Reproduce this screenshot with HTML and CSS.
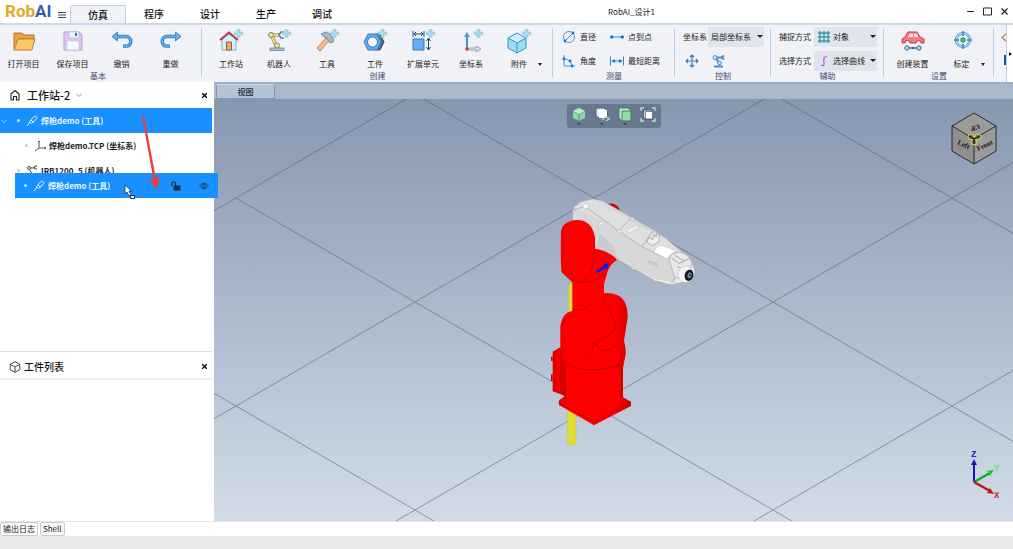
FILE: index.html
```html
<!DOCTYPE html>
<html lang="zh-CN">
<head>
<meta charset="utf-8">
<title>RobAI_设计1</title>
<link rel="stylesheet" href="styles.css">
</head>
<body>
<svg class="defs" width="0" height="0" aria-hidden="true">
  <defs>
    <symbol id="plus" viewBox="0 0 10 10"><path d="M3.500 .5h3v3h3v3h-3v3h-3v-3h-3v-3h3z" fill="#a3dcf3" stroke="#8fbfda" stroke-width=".7"/></symbol>
    <symbol id="torch" viewBox="0 0 12 12"><path d="M1 11l3-4M3.500 6.500l4-4.500 2-1 1.500 1.500-1 2L5.500 8.500zM5 5l2.500 2.500" fill="none" stroke="currentColor" stroke-width="1"/></symbol>
    <symbol id="cubeline" viewBox="0 0 12 12"><path d="M6 .7l4.800 2.600v5.400L6 11.300 1.200 8.700V3.300zM1.200 3.300L6 6l4.800-2.700M6 6v5.300" fill="none" stroke="currentColor" stroke-width="1" stroke-linejoin="round"/></symbol>
  </defs>
</svg>
<div class="app">
  <header class="titlebar">
    <div class="logo"><span class="logo-rob">Rob</span><span class="logo-ai">AI</span></div>
    <button class="menu" aria-label="菜单"><svg width="8" height="8" viewBox="0 0 8 8"><path d="M0 1.500h8M0 4h8M0 6.500h8" stroke="#333" stroke-width=".9"/></svg></button>
    <nav class="tabs">
      <button class="tab active">仿真</button><button class="tab">程序</button><button class="tab">设计</button><button class="tab">生产</button><button class="tab">调试</button>
    </nav>
    <div class="title">RobAI_设计1</div>
    <div class="window-buttons">
      <button aria-label="最小化"><svg width="9" height="9" viewBox="0 0 9 9"><path d="M1 4.500h7" stroke="#222"/></svg></button>
      <button aria-label="最大化"><svg width="9" height="9" viewBox="0 0 9 9"><path d="M.5 1h8v7h-8z" fill="none" stroke="#222"/></svg></button>
      <button aria-label="关闭"><svg width="9" height="9" viewBox="0 0 9 9"><path d="M1.500 1.500l6 6M7.500 1.500l-6 6" stroke="#222" stroke-width="1.200"/></svg></button>
    </div>
  </header>

  <section class="ribbon">
    <div class="group g-basic">
      <div class="tools">
        <button class="tool"><svg viewBox="0 0 26 26"><path d="M3 21V5h8l2 2h10v4H7L4 21z" fill="#e9a33f" stroke="#a87834"/><path d="M7 11h17l-3 11H3z" fill="#fbc66c" stroke="#b98539"/></svg><span>打开项目</span></button>
        <button class="tool"><svg viewBox="0 0 26 26"><path d="M4 4h15l3 3v15H4z" fill="#dcc6ee" stroke="#b9a0d2"/><path d="M9 4h10v6H9z" fill="#eef4fb" stroke="#a9b3cc" stroke-width=".6"/><path d="M15 5h2v3h-2z" fill="#416f99"/><path d="M7 13h12v9H7z" fill="#f6f8fc" stroke="#c5b8dc" stroke-width=".6"/></svg><span>保存项目</span></button>
        <button class="tool"><svg viewBox="0 0 26 26"><path d="M7 8.500h10a4.800 4.800 0 010 9.600h-3" fill="none" stroke="#2573bd" stroke-width="3.400"/><path d="M8.500 4L3 8.500 8.500 13z" fill="#65b0f5" stroke="#2573bd" stroke-width=".8"/><path d="M7 8.500h10a4.800 4.800 0 010 9.600h-2.500" fill="none" stroke="#65b0f5" stroke-width="1.900"/></svg><span>撤销</span></button>
        <button class="tool"><svg viewBox="0 0 26 26"><path d="M19 8.500H9a4.800 4.800 0 000 9.600h3" fill="none" stroke="#2573bd" stroke-width="3.400"/><path d="M17.500 4L23 8.500 17.500 13z" fill="#65b0f5" stroke="#2573bd" stroke-width=".8"/><path d="M19 8.500H9a4.800 4.800 0 000 9.600h2.500" fill="none" stroke="#65b0f5" stroke-width="1.900"/></svg><span>重做</span></button>
      </div>
      <div class="caption">基本</div>
    </div>

    <div class="group g-create">
      <div class="tools">
        <button class="tool"><svg viewBox="0 0 26 26"><path d="M4 12l7-6 7 6v10H4z" fill="#d5f0fb" stroke="#7cacc7"/><path d="M8.500 14h5v8h-5z" fill="#f0a36a" stroke="#95603c"/><path d="M2 12l9-7.500L20 12" fill="none" stroke="#c8333d" stroke-width="1.800"/><use href="#plus" x="16" y="1" width="9" height="9"/></svg><span>工作站</span></button>
        <button class="tool"><svg viewBox="0 0 26 26"><path d="M4 7h9M6 8l5 12" stroke="#928f62" stroke-width="3.600"/><path d="M4 7h9M6 8l5 12" stroke="#eadb83" stroke-width="2.300"/><circle cx="5" cy="7" r="2.500" fill="#f4e48d" stroke="#85845f"/><path d="M18 4h-3l-2 3 2 3h3" fill="none" stroke="#637c93" stroke-width="1.600"/><path d="M4 20h14v2.500H4z" fill="#b5c5d2" stroke="#637c93" stroke-width=".8"/><circle cx="11" cy="17.500" r="2.500" fill="#f4e48d" stroke="#85845f"/><use href="#plus" x="16" y="1" width="9" height="9"/></svg><span>机器人</span></button>
        <button class="tool"><svg viewBox="0 0 26 26"><path d="M3 20l9-10 3 3-9 10z" fill="#ffb580" stroke="#c8855a"/><path d="M7 6l5-2 4 2 4 6-2 3-3-1-2-4-3-1z" fill="#a4bac9" stroke="#758e9e"/><use href="#plus" x="16" y="1" width="9" height="9"/></svg><span>工具</span></button>
        <button class="tool"><svg viewBox="0 0 26 26"><path d="M13 6h5l4 8-4 8h-5z" fill="#526784" stroke="#334c6b"/><path d="M6 6h9l4 8-4 8H6l-4-8z" fill="#65a8ee" stroke="#3f7dbe"/><circle cx="10.500" cy="14" r="5" fill="#f3f7fc" stroke="#3f7dbe"/><use href="#plus" x="16" y="1" width="9" height="9"/></svg><span>工件</span></button>
        <button class="tool"><svg viewBox="0 0 26 26"><path d="M3 11h11v11H3z" fill="#66aef3" stroke="#3a79b6"/><path d="M4 6h9M4 6l2-2M4 6l2 2M13 6l-2-2M13 6l-2 2M3 3v6M14 3v6M18.500 11v10M18.500 10l-2 3M18.500 10l2 3M18.500 22l-2-3M18.500 22l2-3" stroke="#184b70" fill="none"/><use href="#plus" x="16" y="1" width="9" height="9"/></svg><span>扩展单元</span></button>
        <button class="tool"><svg viewBox="0 0 26 26"><path d="M9 20V8" stroke="#3b86cd" stroke-width="1.800"/><path d="M6 9l3-5 3 5z" fill="#4d99df"/><path d="M10 20h8v-2l5 3-5 3v-2h-8z" fill="#d7e2ed" stroke="#8197ad" stroke-width=".8"/><circle cx="9" cy="21" r="1.800" fill="#d63843"/><use href="#plus" x="16" y="1" width="9" height="9"/></svg><span>坐标系</span></button>
        <button class="tool"><svg viewBox="0 0 26 26"><path d="M2 10l9-5 9 5v10l-9 5-9-5z" fill="#9bdcfb"/><path d="M2 10l9-5 9 5-9 5z" fill="#c8f1ff"/><path d="M2 10l9-5 9 5v10l-9 5-9-5zM2 10l9 5 9-5M11 15v10" fill="none" stroke="#438ec3"/><use href="#plus" x="16" y="1" width="9" height="9"/></svg><span>附件</span></button>
        <button class="more" aria-label="更多"><i class="caret"></i></button>
      </div>
      <div class="caption">创建</div>
    </div>

    <div class="group g-measure">
      <div class="pairs">
        <button class="small"><svg viewBox="0 0 14 14"><circle cx="7" cy="7" r="5.500" fill="none" stroke="#5294cc"/><path d="M3 11l8-8" stroke="#1c82d8"/><circle cx="3" cy="11" r="1.400" fill="#0878db"/><circle cx="11" cy="3" r="1.400" fill="#0878db"/></svg><span>直径</span></button>
        <button class="small"><svg viewBox="0 0 14 14"><path d="M1 7h12" stroke="#3088d4"/><circle cx="1.700" cy="7" r="1.700" fill="#0878db"/><circle cx="12.300" cy="7" r="1.700" fill="#0878db"/></svg><span>点到点</span></button>
        <button class="small"><svg viewBox="0 0 14 14"><path d="M2 1v11h11M2 5q7 0 8 7" fill="none" stroke="#4b94cf"/><circle cx="2" cy="5" r="1.400" fill="#0878db"/><circle cx="8" cy="7" r="1.400" fill="#0878db"/><circle cx="10" cy="12" r="1.400" fill="#0878db"/></svg><span>角度</span></button>
        <button class="small"><svg viewBox="0 0 14 14"><path d="M.5 2.500v9M13.500 2.500v9M2 7h10" stroke="#3088d4"/><path d="M1.500 7l3.500-2v4zM12.500 7L9 5v4z" fill="#0878db"/></svg><span>最短距离</span></button>
      </div>
      <div class="caption">测量</div>
    </div>

    <div class="group g-control">
      <div class="rows">
        <div class="row"><label for="cs">坐标系</label><div class="combo"><select id="cs"><option>局部坐标系</option></select><i class="caret"></i></div></div>
        <div class="row icons">
          <button aria-label="移动"><svg width="14" height="14" viewBox="0 0 14 14"><path d="M7 1v12M1 7h12M5 3l2-2 2 2M5 11l2 2 2-2M3 5L1 7l2 2M11 5l2 2-2 2" fill="none" stroke="#3e80b9" stroke-width="1.200"/></svg></button>
          <button aria-label="机器人控制"><svg width="14" height="14" viewBox="0 0 14 14"><path d="M3 3.500h6M4 4l4 7M2 12.500h9M12 1.500L9.500 3.500l2.500 2" fill="none" stroke="#448fcc" stroke-width="2"/><circle cx="3" cy="3.500" r="2" fill="#cde7fb" stroke="#448fcc"/><circle cx="7.500" cy="9" r="1.800" fill="#cde7fb" stroke="#448fcc"/></svg></button>
        </div>
      </div>
      <div class="caption">控制</div>
    </div>

    <div class="group g-assist">
      <div class="rows">
        <div class="row"><label for="snap">捕捉方式</label><div class="combo with-icon"><svg viewBox="0 0 12 12"><path d="M2 0v12M6 0v12M10 0v12M0 2h12M0 6h12M0 10h12" stroke="#35979c" stroke-width="1.300"/></svg><select id="snap"><option>对象</option></select><i class="caret"></i></div></div>
        <div class="row"><label for="pick">选择方式</label><div class="combo with-icon"><svg viewBox="0 0 12 12"><path d="M3 10.500h2Q6.500 10 6 7.500T6 3Q6.500 1.500 9 1.500" fill="none" stroke="#ad55d0" stroke-width="1.200"/></svg><select id="pick"><option>选择曲线</option></select><i class="caret"></i></div></div>
      </div>
      <div class="caption">辅助</div>
    </div>

    <div class="group g-settings">
      <div class="tools">
        <button class="tool"><svg viewBox="0 0 26 26"><path d="M2 15v-4l3-2 3-5h9l3 5 4 2v4h-3a2.500 2.500 0 00-5 0h-6a2.500 2.500 0 00-5 0z" fill="#f77b80" stroke="#bd3e47"/><path d="M8 9l2-3.500h3V9zM14 5.500h2.500l2 3.500H14z" fill="#f5e4e8"/><path d="M8 20h11" stroke="#3e668b" stroke-width="1.400"/><circle cx="7" cy="20" r="2.200" fill="#b7d7ec" stroke="#3e668b"/><circle cx="13" cy="20" r="1.200" fill="#3e668b"/><circle cx="19" cy="20" r="2.200" fill="#b7d7ec" stroke="#3e668b"/></svg><span>创建装置</span></button>
        <button class="tool"><svg viewBox="0 0 26 26"><circle cx="14" cy="12" r="6.800" fill="#e4f4fc" stroke="#3b8dc2" stroke-width="2.600"/><circle cx="14" cy="12" r="6.800" fill="none" stroke="#a8dcf4" stroke-width="1.400"/><path d="M14 3v5M14 16v5M5 12h5M18 12h5" stroke="#407eaa" stroke-width="1.600"/><circle cx="14" cy="12" r="2.300" fill="#53c06b" stroke="#2d8a61"/></svg><span>标定</span></button>
        <button class="more" aria-label="更多"><i class="caret"></i></button>
      </div>
      <div class="caption">设置</div>
    </div>
    <div class="group g-rest"><svg width="6" height="42" viewBox="0 0 6 42"><path d="M6 5L1 9.500 6 14" fill="none" stroke="#b88a42" stroke-width="1.200"/><path d="M4 27v9h2" fill="none" stroke="#164dc1" stroke-width="2"/></svg></div>
    <button class="next" aria-label="下一页"><i></i></button>
  </section>

  <main class="workspace">
    <aside class="sidebar">
      <section class="panel panel-tree">
        <div class="panel-head">
          <svg width="12" height="12" viewBox="0 0 12 12"><path d="M2 5v6h2.500V7.500h3V11H10V5L6 1.500z" fill="none" stroke="#222" stroke-width="1.100" stroke-linejoin="round"/></svg>
          <h2>工作站-2</h2>
          <button class="expand" aria-label="展开"><svg width="6" height="6" viewBox="0 0 6 6"><path d="M.5 2L3 4.500 5.500 2" fill="none" stroke="#777" stroke-width=".8"/></svg></button>
          <button class="close" aria-label="关闭面板"><svg width="5" height="5" viewBox="0 0 5 5"><path d="M0 0l5 5M5 0L0 5" stroke="#000" stroke-width="1.300"/></svg></button>
        </div>
        <ul class="tree">
          <li class="node selected"><svg class="chev" width="6" height="6" viewBox="0 0 6 6"><path d="M.5 2L3 4.500 5.500 2" fill="none" stroke="#cde6ff" stroke-width=".8"/></svg><i class="dot"></i><svg class="kind" width="12" height="12"><use href="#torch"/></svg><span>焊枪demo (工具)</span></li>
          <li class="node child"><i class="dot"></i><svg class="kind" width="12" height="12" viewBox="0 0 12 12"><path d="M5 1v7h7M5 8l-4 3M4 2l1-1 1 1M10.500 7L12 8l-1.500 1" fill="none" stroke="#555" stroke-width="1"/></svg><span>焊枪demo.TCP (坐标系)</span></li>
          <li class="node robot"><i class="dot"></i><svg class="kind" width="12" height="12" viewBox="0 0 12 12"><path d="M3 3h4l2-1M3 4l4 6M2 11h8M11 1H9L8 3l1 1h2" fill="none" stroke="#444" stroke-width="1"/><circle cx="3" cy="3" r="1.500" fill="#fff" stroke="#444"/></svg><span>IRB1200_5 (机器人)</span></li>
        </ul>
        <div class="node dragged"><i class="dot"></i><svg class="kind" width="12" height="12"><use href="#torch"/></svg><span>焊枪demo (工具)</span>
          <button class="lock" aria-label="锁定"><svg width="10" height="10" viewBox="0 0 10 10"><path d="M3 5h6v4H3z" fill="#153044" stroke="#153044"/><path d="M1 5V2.500a1.500 1.500 0 013.500 0V5" fill="none" stroke="#153044" stroke-width="1.200"/></svg></button>
          <button aria-label="可见"><svg width="10" height="10" viewBox="0 0 10 10"><path d="M.5 5Q5-.5 9.500 5 5 10.500.5 5z" fill="none" stroke="#164468"/><circle cx="5" cy="5" r="1.500" fill="none" stroke="#164468"/></svg></button>
        </div>
        <svg class="drag-arrow" width="24" height="76" viewBox="0 0 24 76"><path d="M3 1l2-.5 12 64-2.500.5z" fill="#ef3b3b"/><path d="M10 65l11-3-3 12z" fill="#ef3b3b"/></svg>
        <svg class="pointer" width="12" height="16" viewBox="0 0 12 16"><path d="M1 1v9l2-2 2 4 2-1-2-4h2.500z" fill="#fff" stroke="#173350" stroke-width=".8"/><path d="M6.500 11.500h4v3h-4z" fill="#fff" stroke="#173350"/></svg>
      </section>
      <section class="panel panel-parts">
        <div class="panel-head">
          <svg width="12" height="12" class="gray"><use href="#cubeline"/></svg>
          <h2>工件列表</h2>
          <button class="close" aria-label="关闭面板"><svg width="5" height="5" viewBox="0 0 5 5"><path d="M0 0l5 5M5 0L0 5" stroke="#000" stroke-width="1.300"/></svg></button>
        </div>
      </section>
    </aside>

    <section class="view">
      <div class="view-tabs"><button>视图</button></div>
      <div class="scene">
        <svg class="model" viewBox="214 99 799 422" preserveAspectRatio="xMidYMid slice" role="img" aria-label="机器人三维模型">
          <defs>
            <linearGradient id="white-arm" x1="0" y1="0" x2=".3" y2="1"><stop offset="0" stop-color="#dcdddd"/><stop offset=".45" stop-color="#d3d4d4"/><stop offset="1" stop-color="#eee"/></linearGradient>
            <linearGradient id="red-body"><stop offset="0" stop-color="#e00000"/><stop offset=".2" stop-color="#ff0000"/><stop offset=".82" stop-color="#fb0000"/><stop offset="1" stop-color="#d00000"/></linearGradient>
            <pattern id="thread" width="6" height="6" patternUnits="userSpaceOnUse"><path d="M0 0h6v6H0z" fill="#f5ed3b"/><path d="M0 2l6 3" stroke="#aaa329" stroke-width="1.500"/></pattern>
          </defs>
          <g stroke="#56606f" stroke-width=".7" opacity=".8">
            <path d="M57 302L415 94M57 510L773 94M236 614L1131 94M594 614L1131 302M952 614l179-104"/>
            <path d="M236 198l716 416M415 94l716 416M773 94l358 208M57 302l537 312"/>
          </g>
          <g transform="translate(540 190) scale(.3333)">
            <path d="M86 290q4-12 15-10v140H86zM82 630h26v132q-13 8-26 0z" fill="url(#thread)" stroke="#c2bb38"/>
            <path d="M200 43q25-10 39 15l-6 20z" fill="#d20000"/>
            <path d="M98 60l22-24 38-10 30 7 152 86 36 25 42 35 36 33 12 34-12 28-22 2-40 8-46-12-120-68-62-24-28-80H98z" fill="url(#white-arm)" stroke="#a9abad" stroke-width="2"/>
            <path d="M126 39l34-9 165 92 45 24 48 36-30 27-82-38-70-34-136-85z" fill="#dfdfde"/>
            <path d="M100 62l34 2 102 60 70 49 82 40 21 48-5 18-58-12-123-69-59-26-32-72z" fill="#d7d7d7"/>
            <path d="M100 61l34-12 102 74 70 47 82 40q25 22 20 50l-14 18M236 123l38-40M306 170l35-51" fill="none" stroke="#b1b2b3" stroke-width="3"/>
            <path d="M180 130l42 40 12 39-64-34z" fill="#c9cacc"/>
            <path d="M260 123l30-17 7 6-29 16z" fill="#f8f8f8" stroke="#96989a"/>
            <path d="M342 187q4-22 27-20l44 17q-27 5-30 24z" fill="#fff" stroke="#969a9d"/>
            <path d="M321 156l6-14 12 7 3-14 7 6v-10l8 2v21l-20 14z" fill="#eee" stroke="#8e9194" stroke-width="2"/>
            <path d="M387 208q8-21 31-22 30 4 38 35l-20 48-32-7z" fill="#e7e7e7" stroke="#a0a1a1" stroke-width="2"/>
            <path d="M394 204l24 16 30-14M405 196l27 17M411 230l20 8" fill="none" stroke="#a7a9aa" stroke-width="3"/>
            <ellipse cx="437" cy="253" rx="23" ry="25" fill="#f3f3f3" stroke="#999"/>
            <ellipse cx="447" cy="256" rx="13" ry="17" transform="rotate(15 447 256)" fill="#111b20"/>
            <ellipse cx="449" cy="256" rx="6" ry="9" transform="rotate(15 449 256)" fill="#6b9097"/><circle cx="450" cy="256" r="3" fill="#122025"/>
            <g fill="#f7f7f7" stroke="#929497"><circle cx="137" cy="49" r="8"/><circle cx="185" cy="100" r="5"/><circle cx="238" cy="124" r="5"/><circle cx="277" cy="86" r="4"/><circle cx="292" cy="166" r="4"/><circle cx="345" cy="269" r="4"/><circle cx="281" cy="235" r="4"/><circle cx="386" cy="241" r="4"/></g>
            <path d="M322 217l8-4v12M334 219l8-3v13M345 223l7-2v10" fill="none" stroke="#aaacae" stroke-width="2"/>
            <path d="M63 125Q68 92 112 90q43 0 53 52v34q40 5 66 33-26 18-30 43l-9 30v27q45-2 60 23 12 22 11 50l-11 70q8 30 4 47l-7 35v88l24 13v13L162 706 57 645v-14l18-13-37-14V485l23-13V410q5-42 36-47v-86l-32-30q-4-30-2-122z" fill="url(#red-body)"/>
            <path d="M162 145q7 42-6 88-8 28-38 45M97 270q43 20 98-16M98 358q40 8 60-21M190 330q25 30 37 82-15 28-65 47l-12 55M62 410q12-29 42-35M76 510v129M245 480v139M79 520q66 38 165 3M165 460q24 43 63 6M55 638l107 58 107-58" fill="none" stroke="#a70000" stroke-width="3" opacity=".6"/>
            <path d="M38 500h-5v14h5zM38 553h-5v20h5zM61 475l14 50v93l-14-8z" fill="#d60000"/>
            <path d="M169 241l23-13-2-6 17-2-5 18-6-2-25 13z" fill="#1414ee"/>
          </g>
        </svg>
        <div class="view-tools">
          <button aria-label="视角"><svg viewBox="0 0 16 20"><path d="M8 2l6 3v7l-6 3-6-3V5z" fill="#8bd8a4"/><path d="M2 5l6 3 6-3M8 8v7" fill="none" stroke="#4c9b71"/><path d="M8 2l6 3-6 3-6-3z" fill="#b5efc3"/><path d="M6 17h4l-2 2z" fill="#313f55"/></svg></button>
          <button aria-label="显示方式"><svg viewBox="0 0 16 20"><path d="M2 2h8l3 2v8H5l-3-2z" fill="#e5eef3" stroke="#49616f"/><path d="M5 4h8v8H5z" fill="#fff"/><path d="M8 14q4-5 7-1l-3 2" fill="none" stroke="#b8c9d7" stroke-width="1.500"/><path d="M6 17h4l-2 2z" fill="#313f55"/></svg></button>
          <button aria-label="渲染方式"><svg viewBox="0 0 16 20"><path d="M2 2h9l3 3v10H5l-3-3z" fill="#bdf0c8" stroke="#477c67"/><path d="M5 5h9v10H5z" fill="#8ddda0" stroke="#477c67"/><path d="M6 17h4l-2 2z" fill="#313f55"/></svg></button>
          <button aria-label="适应窗口"><svg viewBox="0 0 16 20"><path d="M3.500 4h7l2 1.500V13h-7l-2-1.500z" fill="#dfe8f2" stroke="#465873"/><path d="M5.500 5.500h7V13h-7z" fill="#fff" stroke="#465873" stroke-width=".7"/><path d="M1 5V2h3M12 2h3v3M1 12v3h3M15 12v3h-3" fill="none" stroke="#b8e6cc" stroke-width="1.300"/></svg></button>
        </div>
        <svg class="nav-cube" width="50" height="56" viewBox="0 0 50 56">
          <path d="M25 2l22 13v25L25 53 3 40V15z" fill="#9b9b9b"/><path d="M3 15l22 13v25L3 40z" fill="#8f8f8f"/>
          <path d="M25 2l22 13v25L25 53 3 40V15zM3 15l22 13 22-13M25 28v25" fill="none" stroke="#1e1e1e" stroke-width=".9"/>
          <g fill="#858474" stroke="#d7ce4d"><circle cx="22" cy="26" r="3"/><circle cx="29" cy="26" r="3"/><circle cx="25" cy="31" r="3"/></g><path d="M20 25l5 3 6-3M25 28v5" stroke="#222" stroke-width="1.500" fill="none"/>
          <text x="8" y="33" transform="rotate(25 8 33)">Left</text><text x="29" y="40" transform="rotate(-25 29 40)">Front</text><text x="30" y="13" transform="rotate(160 30 13)">UP</text>
        </svg>
        <svg class="axes" width="38" height="54" viewBox="0 0 38 54">
          <path d="M8 34V14" stroke="#1616bd" stroke-width="2"/><path d="M5 17l3-6 3 6z" fill="#1616bd"/>
          <path d="M8 34l16-9" stroke="#17a326" stroke-width="2.200"/><path d="M21 23l7-1-4 6z" fill="#17c82a"/>
          <path d="M8 34l16 9" stroke="#ae1414" stroke-width="2.200"/><path d="M21 45l7 1-4-6z" fill="#c81414"/>
          <text x="5" y="9" fill="#1b24c6">Z</text><text x="28" y="23" fill="#58e86a">Y</text><text x="28" y="50" fill="#d12222">X</text>
        </svg>
      </div>
    </section>
  </main>
  <footer><div class="output-tabs"><button>输出日志</button><button>Shell</button></div><div class="status"></div></footer>
</div>
</body>
</html>
```
FILE: styles.css
```css
* { box-sizing: border-box; }
body { margin: 0; background: #fff; color: #222; font: 8px/12px "Noto Sans CJK SC", sans-serif; }
button, select { margin: 0; padding: 0; border: 0; background: none; color: inherit; font: inherit; }
svg { display: block; flex: none; }
h2 { margin: 0; }
.defs { position: absolute; }
.app { display: flex; flex-direction: column; min-height: 100vh; overflow: hidden; }

.titlebar { display: grid; grid-template-columns: 56px 14px 280px 1fr 100px; height: 23px; align-items: center; }
.logo { padding-left: 5px; font: bold 17px/23px Roboto, sans-serif; }
.logo-rob { color: #e1aa24; }
.logo-ai { color: #315eac; }
.menu { padding: 6px 2px 0; }
.tabs { display: flex; align-self: end; }
.tab { width: 56px; height: 18px; font-size: 10px; font-weight: 500; line-height: 18px; color: #111; flex: none; }
.tab.active { background: #f0f2f7; border: 1px solid #bfd0e5; border-bottom: 0; border-radius: 2px 2px 0 0; }
.title { white-space: nowrap; text-align: center; }
.window-buttons { display: flex; gap: 8px; padding-right: 4px; justify-content: flex-end; }
.window-buttons button { width: 9px; }

.ribbon { display: flex; height: 59px; background: #f0f2f7; border-top: 2px solid #ccd9e9; overflow: hidden; }
.group { position: relative; display: flex; flex-direction: column; flex: none; height: 57px; }
.group::after { content: ""; position: absolute; top: 3px; right: 0; bottom: 5px; width: 1px; background: #bfcde0; }
.g-basic { width: 202px; }
.g-create { width: 351px; }
.g-measure { width: 122px; }
.g-control { width: 96px; }
.g-assist { width: 113px; }
.g-settings { width: 110px; }
.g-rest { flex: 1; align-items: flex-end; padding-top: 3px; }
.g-rest::after { top: 0; bottom: 0; }
.caption { color: #3d4b70; text-align: center; height: 12px; line-height: 12px; }
.tools { display: flex; height: 45px; padding-top: 3px; }
.tool { display: flex; flex-direction: column; align-items: center; width: 49px; white-space: nowrap; }
.tool svg { width: 26px; height: 26px; margin-bottom: 4px; }
.g-basic .tools { margin-left: -1px; }
.g-basic .caption { padding-right: 6px; }
.g-create .tools { padding-left: 5px; }
.g-create .tool { width: 48px; }
.g-settings .tools { padding-left: 4px; }
.more { align-self: flex-end; width: 6px; margin-left: -5px; padding: 4px 0; }
.caret { display: block; width: 0; height: 0; border: 3px solid transparent; border-top-color: #222; border-bottom: 0; }
.more .caret { border-width: 2px; border-top-width: 3px; border-bottom: 0; }
.pairs { display: grid; grid-template-columns: 48px 1fr; grid-template-rows: 24px 24px; height: 45px; padding-left: 9px; }
.small { display: flex; align-items: center; gap: 4px; white-space: nowrap; }
.small svg { width: 14px; height: 14px; }
.rows { display: flex; flex-direction: column; height: 45px; padding: 2px 7px 0 8px; }
.row { display: flex; align-items: center; justify-content: space-between; flex: none; height: 24px; padding-bottom: 4px; white-space: nowrap; }
.row label { flex: none; }
.row.icons { justify-content: flex-start; gap: 13px; padding-left: 2px; }
.combo { position: relative; width: 56px; height: 20px; background: #dfe4ed; }
.combo select { width: 100%; height: 20px; padding-left: 3px; appearance: none; }
.combo .caret { position: absolute; right: 1px; top: 8px; pointer-events: none; }
.with-icon { width: 63px; }
.with-icon select { padding-left: 19px; }
.with-icon svg { position: absolute; left: 4px; top: 4px; width: 12px; height: 12px; pointer-events: none; }
.next { width: 6px; background: #fff; padding-left: 2px; }
.next i { display: block; border: 2px solid transparent; border-left: 3px solid #111; border-right: 0; }

.workspace { display: flex; flex: 1; min-height: 0; }
.sidebar { position: relative; z-index: 1; display: flex; flex: 0 0 214px; flex-direction: column; background: #fff; padding-right: 2px; }
.panel-tree { position: relative; flex: 270; }
.panel-parts { flex: 169; border-top: 1px solid #ddd; }
.panel-head { display: flex; align-items: center; height: 26px; padding: 0 5px 0 9px; }
.panel-head h2 { padding-left: 6px; font-size: 11px; font-weight: 500; line-height: 20px; color: #111; }
.panel-parts h2 { padding-left: 3px; font-size: 10px; }
.panel-parts .panel-head { height: 28px; padding-top: 3px; border-bottom: 2px solid #ececec; }
.gray { color: #444; }
.expand { padding-left: 6px; }
.close { margin-left: auto; }
.tree { margin: 0; padding: 0; list-style: none; }
.node { display: flex; align-items: center; height: 25px; color: #222; font-weight: 700; white-space: nowrap; }
.node .kind { margin: 0 3px 0 6px; }
.dot { width: 3px; height: 3px; border-radius: 50%; background: #ccc; }
.selected, .dragged { background: #1890ff; color: #eaf5ff; }
.selected .dot, .dragged .dot { background: #cce6ff; }
.selected { padding-left: 1px; }
.chev { margin-right: 10px; }
.child { padding-left: 25px; }
.robot { padding-left: 17px; }
.dragged { position: absolute; z-index: 1; top: 91px; left: 15px; width: 203px; padding: 0 9px; }
.dragged .lock { margin-left: auto; margin-right: 18px; }
.drag-arrow { position: absolute; z-index: 2; left: 139px; top: 33px; }
.pointer { position: absolute; z-index: 2; left: 124px; top: 102px; }

.view { display: flex; flex: 1; min-width: 0; flex-direction: column; }
.view-tabs { height: 17px; background: #aab8cb; border-top: 2px solid #9dadc3; }
.view-tabs button { display: block; width: 59px; height: 15px; margin-left: 2px; background: #b4c4d8; border: 1px solid #8596ae; border-top-color: #c8d5e4; font-weight: 500; line-height: 13px; }
.scene { position: relative; flex: 1; min-height: 0; background: linear-gradient(#8797b0, #d2dce8); }
.model { position: absolute; inset: 0; width: 100%; height: 100%; }
.view-tools { position: absolute; left: 50%; top: 5px; display: flex; gap: 7px; width: 94px; height: 24px; margin-left: -47px; padding: 2px 4px; background: #67788f; border-radius: 3px; }
.view-tools svg { width: 16px; height: 20px; }
.nav-cube { position: absolute; top: 12px; right: 14px; }
.nav-cube text { font: bold 7px "Liberation Serif", serif; fill: #111; }
.axes { position: absolute; right: 9px; bottom: 19px; }
.axes text { font: bold 9px "Liberation Mono", monospace; }

.output-tabs { display: flex; gap: 2px; height: 15px; border-top: 1px solid #e5e5e5; }
.output-tabs button { height: 14px; padding: 0 2px; border: 1px solid #ccc; border-radius: 2px; background: #fafafa; line-height: 12px; }
.status { height: 13px; background: #e8e8e8; }
```
